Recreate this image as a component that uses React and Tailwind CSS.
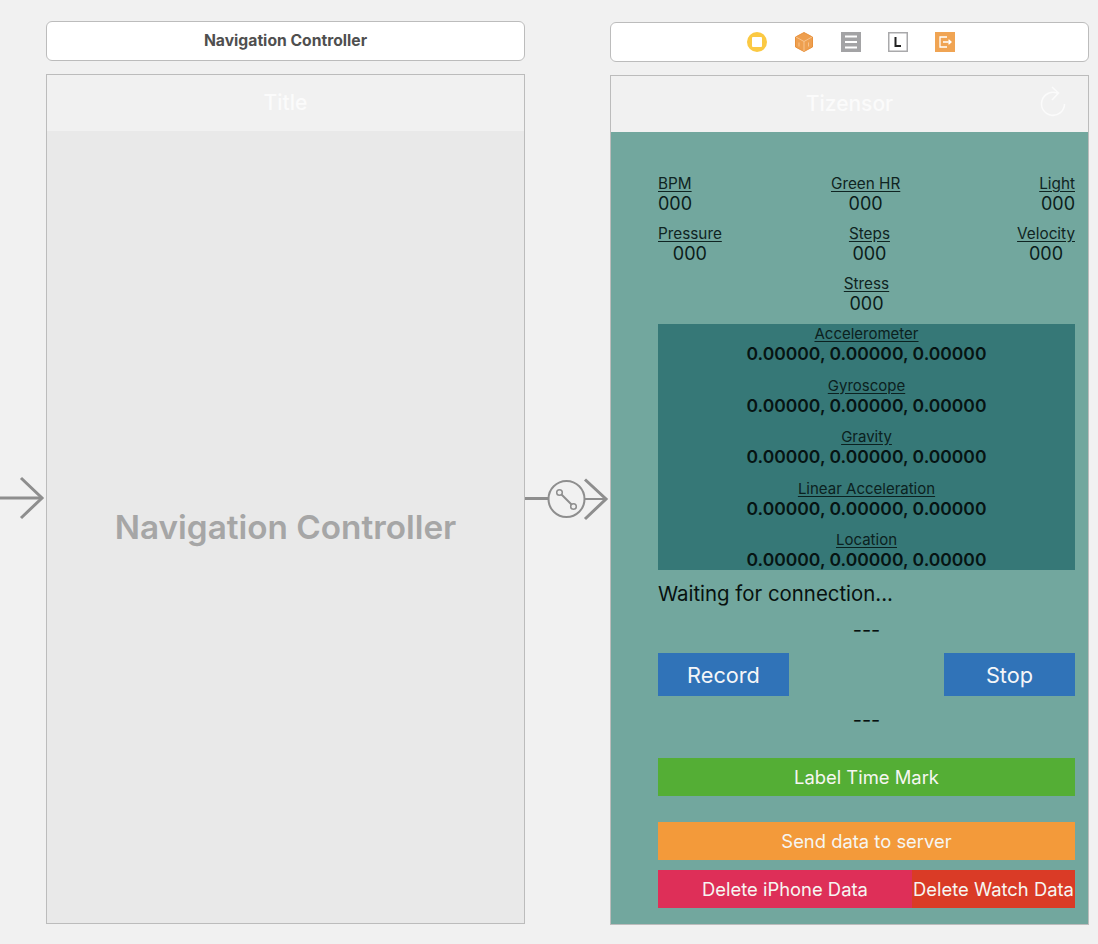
import React from 'react';

const font = { fontFamily: 'Inter, "Liberation Sans", sans-serif' };

function Stat({ label, align = 'items-center' }) {
  return (
    <div className={`flex flex-col ${align}`}>
      <span className="h-5 text-[15.3px] leading-5 underline underline-offset-2 text-[#0f2422]">{label}</span>
      <span className="h-5 text-[18px] leading-5 text-[#0b1c1a]">000</span>
    </div>
  );
}

function Vector({ label }) {
  return (
    <div className="flex h-[51.5px] flex-col items-center">
      <span className="h-5 text-[15px] leading-5 underline underline-offset-2 text-[#0b2120]">{label}</span>
      <span className="h-5 text-[17.5px] font-semibold leading-5 text-[#061413]">0.00000, 0.00000, 0.00000</span>
    </div>
  );
}

function DocIcons() {
  return (
    <div className="flex items-center gap-[27px] pl-[3px]">
      <svg width="20" height="20" viewBox="0 0 20 20">
        <circle cx="10" cy="10" r="10" fill="#fbc943" />
        <rect x="5" y="5" width="10" height="10" rx="1" fill="#fff" />
      </svg>
      <svg width="20" height="20" viewBox="0 0 20 20">
        <path d="M10 0.5 18.5 5v10L10 19.5 1.5 15V5z" fill="#ee9f4f" stroke="#e8913c" />
        <path d="M2 5l8 4.5L18 5M10 9.500V19" fill="none" stroke="#f8c48e" strokeWidth="1" />
        <path d="M5 10.500v4M14.500 10.500v4" fill="none" stroke="#f8c48e" strokeWidth="1" />
      </svg>
      <svg width="20" height="20" viewBox="0 0 20 20">
        <rect width="20" height="20" fill="#a3a3a5" />
        <path d="M4 4.500h12M4 10h12M4 15.500h12" stroke="#fff" strokeWidth="2" />
      </svg>
      <svg width="20" height="20" viewBox="0 0 20 20">
        <rect x="0.750" y="0.750" width="18.500" height="18.500" fill="#fff" stroke="#a9a9ab" strokeWidth="1.500" />
        <path d="M7.500 5v9h5.500" fill="none" stroke="#222" strokeWidth="2" />
      </svg>
      <svg width="20" height="20" viewBox="0 0 20 20">
        <rect width="20" height="20" fill="#f0a453" />
        <path d="M12 5H5v10h7" fill="none" stroke="#fff" strokeWidth="1.300" />
        <path d="M8 10h8M13.500 7.800 16 10l-2.500 2.200" fill="none" stroke="#fff" strokeWidth="1.300" />
      </svg>
    </div>
  );
}

function Chip({ children }) {
  return (
    <div className="flex h-10 items-center justify-center rounded-[6px] border border-[#bcbcbc] bg-white">
      {children}
    </div>
  );
}

function NavBar({ title, children }) {
  return (
    <div className="relative flex h-[56px] shrink-0 items-center justify-center bg-[#f1f1f1] text-[21px] font-medium text-[#fbfbfb]">
      {title}
      {children}
    </div>
  );
}

function FullButton({ className, children }) {
  return (
    <div className={`flex items-center justify-center pt-px text-[18.4px] text-[#f6f6f2] ${className}`}>{children}</div>
  );
}

export default function App() {
  return (
    <div className="relative h-[944px] w-[1098px] overflow-hidden bg-[#f1f1f1]" style={font}>
      <div className="flex pl-[46px]">
        {/* Navigation Controller scene */}
        <div className="flex w-[479px] flex-col pt-[21px]">
          <Chip>
            <span className="text-[15.7px] font-bold text-[#4f4f4f]">Navigation Controller</span>
          </Chip>
          <div className="mt-[13px] flex h-[850px] flex-col border border-[#bcbcbc]">
            <NavBar title="Title" />
            <div className="flex flex-1 items-center justify-center bg-[#e9e9e9] pt-[2px] text-[33.3px] font-semibold text-[#a6a6a6]">
              Navigation Controller
            </div>
          </div>
        </div>

        {/* Tizensor scene */}
        <div className="ml-[85px] flex w-[479px] flex-col pt-[22px]">
          <Chip>
            <DocIcons />
          </Chip>
          <div className="mt-[13px] flex h-[850px] flex-col border border-[#bcbcbc]">
            <NavBar title="Tizensor">
              <svg className="absolute right-[20px] top-[10px]" width="30" height="36" viewBox="0 0 30 36" fill="none" stroke="#fbfbfb" strokeWidth="1.500">
                <path d="M20 7.500A11.500 11.500 0 1 0 26.500 18" />
                <path d="M14 1l6.500 6-6.500 7" />
              </svg>
            </NavBar>
            <div className="flex flex-1 flex-col bg-[#72a79e] pl-[47px] pr-[13px] pt-[42px]">
              <div className="flex justify-between">
                <Stat label="BPM" align="items-start" />
                <Stat label="Green HR" />
                <Stat label="Light" align="items-end" />
              </div>
              <div className="mt-[10px] flex justify-between">
                <Stat label="Pressure" />
                <Stat label="Steps" />
                <Stat label="Velocity" />
              </div>
              <div className="mt-[10px] flex justify-center">
                <Stat label="Stress" />
              </div>
              <div className="mt-[10px] h-[246px] overflow-hidden bg-[#367877]">
                <Vector label="Accelerometer" />
                <Vector label="Gyroscope" />
                <Vector label="Gravity" />
                <Vector label="Linear Acceleration" />
                <Vector label="Location" />
              </div>
              <div className="mt-[12px] h-6 text-[20.4px] leading-6 text-[#07110f]">Waiting for connection...</div>
              <div className="mt-3 h-6 text-center text-[20px] leading-6 text-[#07110f]">---</div>
              <div className="mt-[11px] flex justify-between">
                <div className="flex h-[43px] w-[131px] items-center justify-center bg-[#3073b8] pt-px text-[21.7px] text-[#f4f6f8]">Record</div>
                <div className="flex h-[43px] w-[131px] items-center justify-center bg-[#3073b8] pt-px text-[21.7px] text-[#f4f6f8]">Stop</div>
              </div>
              <div className="mt-3 h-6 text-center text-[20px] leading-6 text-[#07110f]">---</div>
              <FullButton className="mt-[26px] h-[38px] bg-[#54ae35]">Label Time Mark</FullButton>
              <FullButton className="mt-[26px] h-[38px] bg-[#f39a3a]">Send data to server</FullButton>
              <div className="mt-[10px] flex h-[38px]">
                <FullButton className="w-[254px] bg-[#de2f58]">Delete iPhone Data</FullButton>
                <FullButton className="flex-1 whitespace-nowrap bg-[#da3b26]">Delete Watch Data</FullButton>
              </div>
            </div>
          </div>
        </div>
      </div>

      {/* entry arrow */}
      <svg className="absolute left-0 top-[470px]" width="46" height="56" viewBox="0 0 46 56" fill="none" stroke="#8e8e8e" strokeWidth="3">
        <path d="M0 28h42" />
        <path d="M21 8l21 20-21 20" />
      </svg>
      {/* segue */}
      <svg className="absolute left-[525px] top-[470px]" width="85" height="60" viewBox="0 0 85 60" fill="none" stroke="#8e8e8e">
        <path d="M0 28.500h23" strokeWidth="3" />
        <circle cx="41.500" cy="29" r="18" strokeWidth="2" />
        <circle cx="34.500" cy="22.500" r="2.800" strokeWidth="1.500" />
        <circle cx="48.500" cy="36.500" r="2.800" strokeWidth="1.500" />
        <path d="M36.500 24.500l10 10" strokeWidth="2" />
        <path d="M60 29h21" strokeWidth="2" />
        <path d="M60 9.500l21 19.500-21 20" strokeWidth="3" />
      </svg>
    </div>
  );
}
